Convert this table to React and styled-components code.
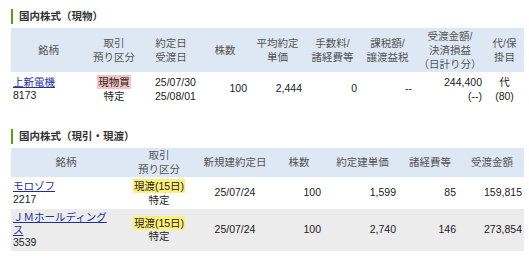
import React from 'react'
import styled, { createGlobalStyle } from 'styled-components'

const Global = createGlobalStyle`
  body {
    margin: 0;
    background: #fff;
    font-family: "Liberation Sans", "Noto Sans CJK JP", sans-serif;
    color: #222;
  }
`

const Page = styled.div`
  padding: 9px 5px 0 11px;
`

const Title = styled.h2`
  margin: 0 0 4px;
  height: 15px;
  line-height: 15px;
  border-left: 2px solid #5a9e18;
  padding-left: 6px;
  font-size: 10.5px;
  font-weight: bold;
  color: #333;
`

const Table = styled.table`
  width: 513px;
  table-layout: fixed;
  border-collapse: collapse;
  font-size: 10.5px;
  margin-bottom: ${props => props.gap || 0}px;
`

const Head = styled.th`
  background: #dde8f4;
  color: #555;
  font-weight: normal;
  text-align: center;
  line-height: ${props => props.lh || 13.5}px;
  padding: 1px 2px;
  vertical-align: middle;
`

const Row = styled.tr`
  background: ${props => (props.shaded ? '#ececec' : '#fff')};
`

const Cell = styled.td`
  text-align: ${props => props.align || 'right'};
  padding: ${props => props.pad || '3px 3px'};
  line-height: 13.5px;
  vertical-align: middle;
  white-space: ${props => (props.wrap ? 'normal' : 'nowrap')};
`

const Line = styled.div`
  line-height: ${props => props.lh || 13.5}px;
`

const StockLink = styled.a`
  color: #1f2f9c;
  text-decoration: underline;
  line-height: 12.5px;
  display: block;
`

const Mark = styled.span`
  display: inline-block;
  background: ${props => (props.tone === 'buy' ? '#f7c4c4' : '#fdf07a')};
  padding: 0 1px;
  line-height: 14px;
  color: #222;
`

const Section = ({ title, children }) => (
  <>
    <Title>{title}</Title>
    {children}
  </>
)

const App = () => (
  <Page>
    <Global />
    <Section title="国内株式（現物）">
      <Table gap={23}>
        <colgroup>
          <col style={{ width: 75 }} />
          <col style={{ width: 56 }} />
          <col style={{ width: 58 }} />
          <col style={{ width: 50 }} />
          <col style={{ width: 55 }} />
          <col style={{ width: 55 }} />
          <col style={{ width: 55 }} />
          <col style={{ width: 70 }} />
          <col style={{ width: 39 }} />
        </colgroup>
        <thead>
          <tr>
            <Head lh={14}>銘柄</Head>
            <Head lh={14}>取引<br />預り区分</Head>
            <Head lh={14}>約定日<br />受渡日</Head>
            <Head lh={14}>株数</Head>
            <Head lh={14}>平均約定<br />単価</Head>
            <Head lh={14}>手数料/<br />諸経費等</Head>
            <Head lh={14}>課税額/<br />譲渡益税</Head>
            <Head lh={14}>受渡金額/<br />決済損益<br />（日計り分）</Head>
            <Head lh={14}>代/保<br />掛目</Head>
          </tr>
        </thead>
        <tbody>
          <Row>
            <Cell align="left" pad="3px 2px">
              <StockLink href="#">上新電機</StockLink>
              <Line lh={14}>8173</Line>
            </Cell>
            <Cell align="center">
              <Mark tone="buy">現物買</Mark>
              <Line>特定</Line>
            </Cell>
            <Cell align="left" pad="3px 0 3px 13px">
              <Line lh={14}>25/07/30</Line>
              <Line lh={14}>25/08/01</Line>
            </Cell>
            <Cell>100</Cell>
            <Cell>2,444</Cell>
            <Cell>0</Cell>
            <Cell>--</Cell>
            <Cell>
              <Line lh={14}>244,400</Line>
              <Line lh={14}>(--)</Line>
            </Cell>
            <Cell align="center" pad="3px 0">
              <Line lh={14}>代</Line>
              <Line lh={14}>(80)</Line>
            </Cell>
          </Row>
        </tbody>
      </Table>
    </Section>

    <Section title="国内株式（現引・現渡）">
      <Table>
        <colgroup>
          <col style={{ width: 110 }} />
          <col style={{ width: 76 }} />
          <col style={{ width: 76 }} />
          <col style={{ width: 52 }} />
          <col style={{ width: 75 }} />
          <col style={{ width: 60 }} />
          <col style={{ width: 64 }} />
        </colgroup>
        <thead>
          <tr>
            <Head>銘柄</Head>
            <Head>取引<br />預り区分</Head>
            <Head>新規建約定日</Head>
            <Head>株数</Head>
            <Head>約定建単価</Head>
            <Head>諸経費等</Head>
            <Head>受渡金額</Head>
          </tr>
        </thead>
        <tbody>
          <Row>
            <Cell align="left" pad="2px 4px 2px 2px" wrap>
              <StockLink href="#">モロゾフ</StockLink>
              <Line lh={14}>2217</Line>
            </Cell>
            <Cell align="center" pad="2px 3px">
              <Mark>現渡(15日)</Mark>
              <Line>特定</Line>
            </Cell>
            <Cell align="center" pad="2px 3px">25/07/24</Cell>
            <Cell pad="2px 4px">100</Cell>
            <Cell pad="2px 4px">1,599</Cell>
            <Cell pad="2px 4px">85</Cell>
            <Cell pad="2px 2px">159,815</Cell>
          </Row>
          <Row shaded>
            <Cell align="left" pad="2px 6px 1px 2px" wrap>
              <StockLink href="#">ＪＭホールディングス</StockLink>
              <Line>3539</Line>
            </Cell>
            <Cell align="center" pad="2px 3px">
              <Mark>現渡(15日)</Mark>
              <Line>特定</Line>
            </Cell>
            <Cell align="center" pad="2px 3px">25/07/24</Cell>
            <Cell pad="2px 4px">100</Cell>
            <Cell pad="2px 4px">2,740</Cell>
            <Cell pad="2px 4px">146</Cell>
            <Cell pad="2px 2px">273,854</Cell>
          </Row>
        </tbody>
      </Table>
    </Section>
  </Page>
)

export default App
